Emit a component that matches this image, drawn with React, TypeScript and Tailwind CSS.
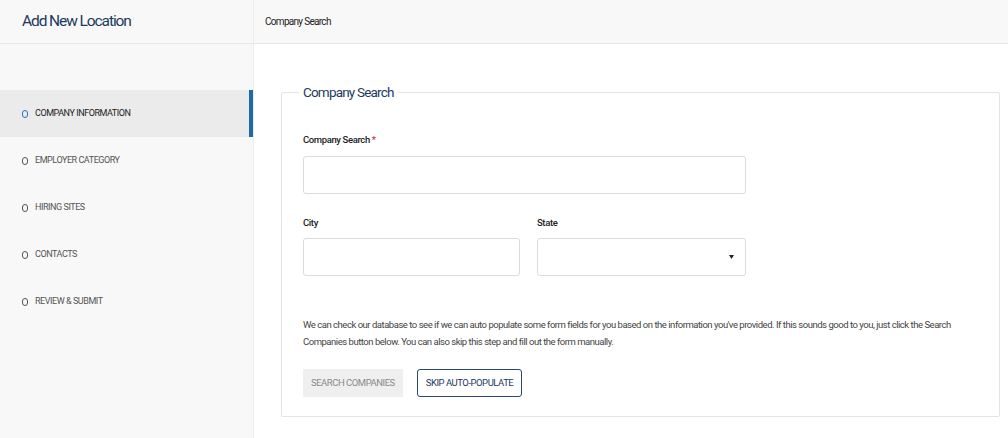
const steps = [
  { label: "COMPANY INFORMATION", active: true },
  { label: "EMPLOYER CATEGORY", active: false },
  { label: "HIRING SITES", active: false },
  { label: "CONTACTS", active: false },
  { label: "REVIEW & SUBMIT", active: false },
]

const font = { fontFamily: "Roboto, 'Liberation Sans', sans-serif" }

const Sidebar = () => (
  <aside className="w-[254px] shrink-0 bg-[#f8f8f8] border-r border-[#ececec] flex flex-col">
    <div className="h-[44px] border-b border-[#e6e6e6] flex items-center pl-[22px]">
      <h1 className="text-[15.5px] tracking-[-0.07em] text-[#1c3a5f] font-normal">Add New Location</h1>
    </div>
    <nav className="pt-[46px] flex flex-col">
      {steps.map((step) => (
        <div
          key={step.label}
          className={`h-[47px] flex items-center pl-[22px] ${
            step.active ? "bg-[#ebebeb] border-r-4 border-[#1c6aab]" : ""
          }`}
        >
          <span
            className={`w-[6px] h-[8px] rounded-full border-[1.5px] mr-[7px] ${
              step.active ? "border-[#2a73b5]" : "border-[#555]"
            }`}
          />
          <span className={`text-[9px] tracking-[-0.05em] ${step.active ? "text-[#222]" : "text-[#555]"}`}>
            {step.label}
          </span>
        </div>
      ))}
    </nav>
  </aside>
)

const Label = ({ children }: { children: React.ReactNode }) => (
  <label className="block text-[9.5px] tracking-[-0.04em] text-[#222] font-medium mb-[8px]">{children}</label>
)

const App = () => {
  return (
    <div className="flex w-[1008px] h-[438px] bg-white overflow-hidden" style={font}>
      <Sidebar />
      <main className="flex-1 flex flex-col">
        <div className="h-[44px] bg-[#f8f8f8] border-b border-[#e6e6e6] flex items-center pl-[11px]">
          <span className="text-[10px] tracking-[-0.07em] text-[#222]">Company Search</span>
        </div>
        <fieldset className="mt-[38px] ml-[27px] mr-[8px] border border-[#e4e4e4] rounded-[2px] px-[21px] pb-[19px]">
          <legend className="-ml-[4px] px-[4px] text-[13.5px] tracking-[-0.06em] text-[#1c3a5f]">Company Search</legend>
          <div className="pt-[31px]">
            <Label>
              Company Search <span className="text-[#c0392b]">*</span>
            </Label>
            <input className="block w-[443px] h-[38px] border border-[#dcdcdc] rounded-[3px] bg-white" />
            <div className="flex gap-[17px] mt-[22px]">
              <div>
                <Label>City</Label>
                <input className="block w-[217px] h-[38px] border border-[#dcdcdc] rounded-[3px] bg-white" />
              </div>
              <div>
                <Label>State</Label>
                <div className="w-[209px] h-[38px] border border-[#dcdcdc] rounded-[3px] bg-white flex items-center justify-end pr-[11px]">
                  <svg width="5" height="4" viewBox="0 0 5 4">
                    <path d="M0 0h5L2.5 4z" fill="#222" />
                  </svg>
                </div>
              </div>
            </div>
            <p className="mt-[40px] text-[9.5px] leading-[17px] tracking-[-0.05em] text-[#444] max-w-[670px]">
              We can check our database to see if we can auto populate some form fields for you based on the information
              you've provided. If this sounds good to you, just click the Search Companies button below. You can also skip
              this step and fill out the form manually.
            </p>
            <div className="flex gap-[14px] mt-[19px]">
              <button className="h-[28px] px-[8px] bg-[#efefef] text-[#8a8a8a] text-[9.5px] tracking-[-0.05em]">
                SEARCH COMPANIES
              </button>
              <button className="h-[28px] px-[8px] border border-[#2a4a6e] rounded-[3px] text-[#1c3a5f] text-[9.5px] tracking-[-0.05em]">
                SKIP AUTO-POPULATE
              </button>
            </div>
          </div>
        </fieldset>
      </main>
    </div>
  )
}

export default App
